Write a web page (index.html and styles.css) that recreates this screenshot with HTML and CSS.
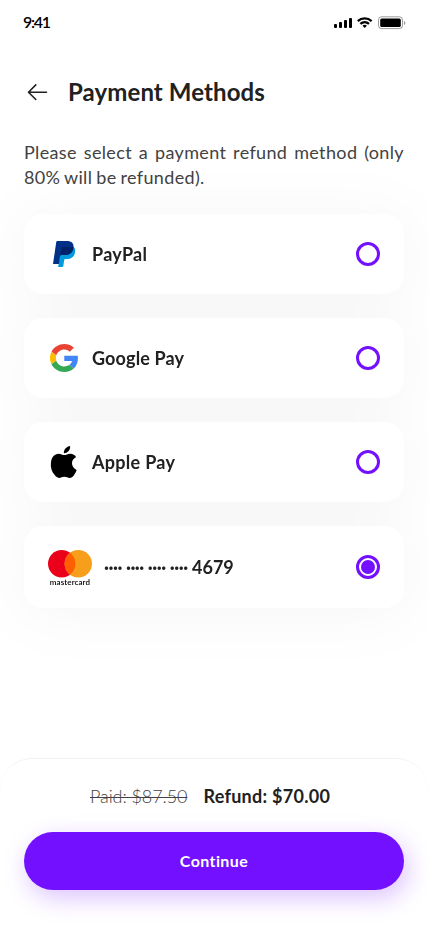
FILE: index.html
```html
<!DOCTYPE html>
<html lang="en">
<head>
<meta charset="utf-8">
<meta name="viewport" content="width=device-width, initial-scale=1">
<title>Payment Methods</title>
<link rel="stylesheet" href="styles.css">
</head>
<body>
<div class="screen">
  <div class="status">
    <span class="time">9:41</span>
    <svg class="status-icons" width="72" height="14" viewBox="0 0 72 14">
      <rect x="0" y="8" width="3" height="4" rx="1"/>
      <rect x="5" y="6" width="3" height="6" rx="1"/>
      <rect x="10" y="4" width="3" height="8" rx="1"/>
      <rect x="15" y="2" width="3" height="10" rx="1"/>
      <g fill="none" stroke="#000" stroke-width="2.3">
        <path d="M23.8 5.1a10.2 10.2 0 0 1 13.8 0"/>
        <path d="M26.4 7.9a6.4 6.4 0 0 1 8.6 0"/>
      </g>
      <path d="M28.5 9.7a3.4 3.4 0 0 1 4.4 0l-2.2 2.2z"/>
      <rect x="44.5" y=".8" width="24" height="11.8" rx="3" fill="none" stroke="#000" stroke-opacity=".38"/>
      <rect x="46.2" y="2.4" width="20.6" height="8.6" rx="1.5"/>
      <path d="M70 5v4c.8-.3 1.3-1 1.3-2s-.5-1.700-1.300-2z" opacity=".4"/>
    </svg>
  </div>

  <header class="header">
    <svg class="back" width="28" height="28" viewBox="0 0 28 28">
      <path d="M22.500 14.200H4.800M11.800 6.900L4.500 14.200l7.300 7.300" fill="none" stroke="#212121" stroke-width="1.600" stroke-linecap="round" stroke-linejoin="round"/>
    </svg>
    <h1 class="title">Payment Methods</h1>
  </header>

  <p class="intro"><span class="line justified">Please select a payment refund method (only</span> <span class="line last">80% will be refunded).</span></p>

  <main class="methods">
    <div class="card">
      <svg class="logo" width="32" height="32" viewBox="0 0 32 32">
        <path fill="#009cde" d="M25.200 8.500c2 1.600 2.300 3.900 1.700 6.500-1 4.300-3.900 6-8.300 6h-1.200c-.7 0-1 .4-1.200 1l-.9 6c-.1.600-.4 1-1 1H10.200L13 10z"/>
        <path fill="#003087" d="M9.200 3h9.600c4.400 0 7.200 2 6.700 6.500-.6 5.300-4 7.600-9.200 7.600h-3c-.7 0-1.100.4-1.200 1.100l-1.200 7.800H5L8.300 3.800c.1-.5.4-.8.9-.8z"/>
        <path fill="#012169" d="M25.500 9.200c-.5 5.400-4 7.900-9.200 7.900h-3c-.5 0-.9.200-1.100.6L13.500 10c.1-.7.600-1.100 1.300-1.100h7.500c1.400 0 2.400.1 3.200.3z"/>
      </svg>
      <span class="name paypal">PayPal</span>
      <span class="radio"></span>
    </div>

    <div class="card">
      <svg class="logo" width="32" height="32" viewBox="0 0 32 32">
        <g transform="translate(2 2) scale(.5950 .5833)">
          <path fill="#ea4335" d="M24 9.500c3.540 0 6.710 1.220 9.210 3.600l6.850-6.850C35.900 2.380 30.470 0 24 0 14.620 0 6.510 5.380 2.560 13.220l7.980 6.190C12.430 13.720 17.740 9.500 24 9.500z"/>
          <path fill="#4285f4" d="M46.980 24.550c0-1.570-.15-3.090-.38-4.550H24v9.020h12.940c-.58 2.960-2.260 5.480-4.780 7.180l7.730 6c4.510-4.180 7.090-10.360 7.090-17.650z"/>
          <path fill="#fbbc05" d="M10.530 28.590c-.48-1.450-.76-2.990-.76-4.590s.27-3.140.76-4.590l-7.980-6.190C.92 16.460 0 20.120 0 24s.92 7.540 2.560 10.780z"/>
          <path fill="#34a853" d="M24 48c6.480 0 11.930-2.130 15.890-5.810l-7.730-6c-2.150 1.450-4.920 2.300-8.160 2.300-6.260 0-11.570-4.220-13.470-9.910l-7.980 6.190C6.510 42.620 14.620 48 24 48z"/>
        </g>
      </svg>
      <span class="name google">Google Pay</span>
      <span class="radio"></span>
    </div>

    <div class="card">
      <svg class="logo" width="32" height="32" viewBox="0 0 32 32">
        <path d="M22.100 0c.3 2.100-.5 3.900-1.700 5.200-1.200 1.300-2.900 2.100-4.500 2-.3-1.900.6-3.700 1.800-4.900C18.800 1.100 20.600.1 22.100 0zM28.100 10.900c-3 1.800-4.300 4-4.100 6.700.2 2.900 1.800 5 4.700 6.300-.7 2-1.600 3.700-2.800 5.300-1.300 1.700-2.500 2.700-4.300 2.700-1.900 0-2.800-1.100-5.200-1.100-2.500 0-3.400 1.100-5.300 1.100-1.800 0-3-1-4.400-2.800C3.700 25.600 2.400 21.300 2.900 16.900c.5-5.800 3.500-9.100 7.800-9.200 2.200 0 3.800 1.400 5.600 1.400 1.700 0 3.700-1.600 6.300-1.400 2.200.1 4.100 1.200 5.500 3.200z"/>
      </svg>
      <span class="name apple">Apple Pay</span>
      <span class="radio"></span>
    </div>

    <div class="card mc">
      <div class="mc-logo">
        <svg width="44" height="28" viewBox="0 0 44 28">
          <circle cx="13.700" cy="13.700" r="13.700" fill="#eb001b"/>
          <circle cx="30.300" cy="13.700" r="13.700" fill="#f79e1b"/>
          <path d="M22 2.800a13.700 13.700 0 0 1 0 21.800 13.700 13.700 0 0 1 0-21.800z" fill="#ff5f00"/>
        </svg>
        <span class="mc-word">mastercard</span>
      </div>
      <span class="name number"><span class="dots">···· ···· ···· ····</span><span class="digits">4679</span></span>
      <span class="radio on"></span>
    </div>
  </main>

  <footer class="footer">
    <div class="totals"><span class="paid">Paid: $87.50</span><span class="refund">Refund: $70.00</span></div>
    <button class="continue">Continue</button>
  </footer>
</div>
</body>
</html>
```
FILE: styles.css
```css
* { box-sizing: border-box; }
body { margin: 0; background: #fff; font-family: Lato, "Liberation Sans", sans-serif; color: #212121; }
.screen { width: 428px; height: 926px; overflow: hidden; display: flex; flex-direction: column; background: #fff; }
.status { height: 44px; flex: none; padding: 0 22px 0 23px; display: flex; align-items: center; justify-content: space-between; }
.time { font-size: 16px; line-height: 20px; font-weight: 600; color: #000; letter-spacing: -1.3px; }
.status-icons { display: block; margin-top: 2px; }
.header { height: 96px; flex: none; padding: 0 24px; display: flex; align-items: center; gap: 16px; }
.title { margin: 0; font-size: 24px; line-height: 30px; font-weight: 700; letter-spacing: .1px; white-space: nowrap; }
.back { flex: none; }
.intro { margin: 0 24px; flex: none; height: 50px; font-size: 18px; line-height: 25px; color: #424242; }
.line { display: block; white-space: nowrap; letter-spacing: .35px; word-spacing: -1px; }
.justified { text-align-last: justify; }
.methods { margin: 24px 24px 0; flex: none; display: flex; flex-direction: column; gap: 24px; filter: drop-shadow(0 4px 30px rgba(4, 6, 15, .04)); }
.card { height: 80px; border-radius: 20px; background: #fff; padding: 0 24px; display: flex; align-items: center; }
.card.mc { height: 82px; }
.logo { flex: none; margin-right: 12px; }
.name { font-size: 18px; line-height: 22px; font-weight: 700; white-space: nowrap; }
.paypal { letter-spacing: .3px; }
.google { letter-spacing: .15px; }
.apple { letter-spacing: .3px; }
.radio { width: 24px; height: 24px; flex: none; margin-left: auto; border: 3px solid #7210ff; border-radius: 50%; display: grid; place-items: center; }
.on::after { content: ""; width: 14px; height: 14px; border-radius: 50%; background: #7210ff; }
.mc-logo { width: 44px; flex: none; margin: 2px 12px 0 0; display: flex; flex-direction: column; align-items: center; }
.mc-logo svg { display: block; }
.mc-word { font-size: 8px; line-height: 8px; font-weight: 600; color: #000; letter-spacing: .1px; }
.number { display: flex; align-items: center; }
.dots { width: 88px; white-space: nowrap; letter-spacing: -.45px; }
.footer { margin-top: auto; height: 168px; flex: none; border-top: 1px solid #f2f2f2; border-radius: 32px 32px 0 0; padding: 25px 24px 0; background: #fff; }
.totals { height: 24px; display: flex; align-items: center; gap: 16px; padding-left: 66px; font-size: 18px; line-height: 24px; white-space: nowrap; }
.paid { font-weight: 300; color: #424242; letter-spacing: -.08px; text-decoration: line-through; text-decoration-thickness: 1px; }
.refund { font-weight: 700; letter-spacing: .28px; }
.continue { display: block; width: 100%; height: 58px; margin-top: 24px; border: 0; border-radius: 29px; background: #7210ff; color: #fff; font: 700 16px/22px Lato, "Liberation Sans", sans-serif; letter-spacing: .4px; box-shadow: 4px 8px 24px rgba(114, 16, 255, .25); }
```
